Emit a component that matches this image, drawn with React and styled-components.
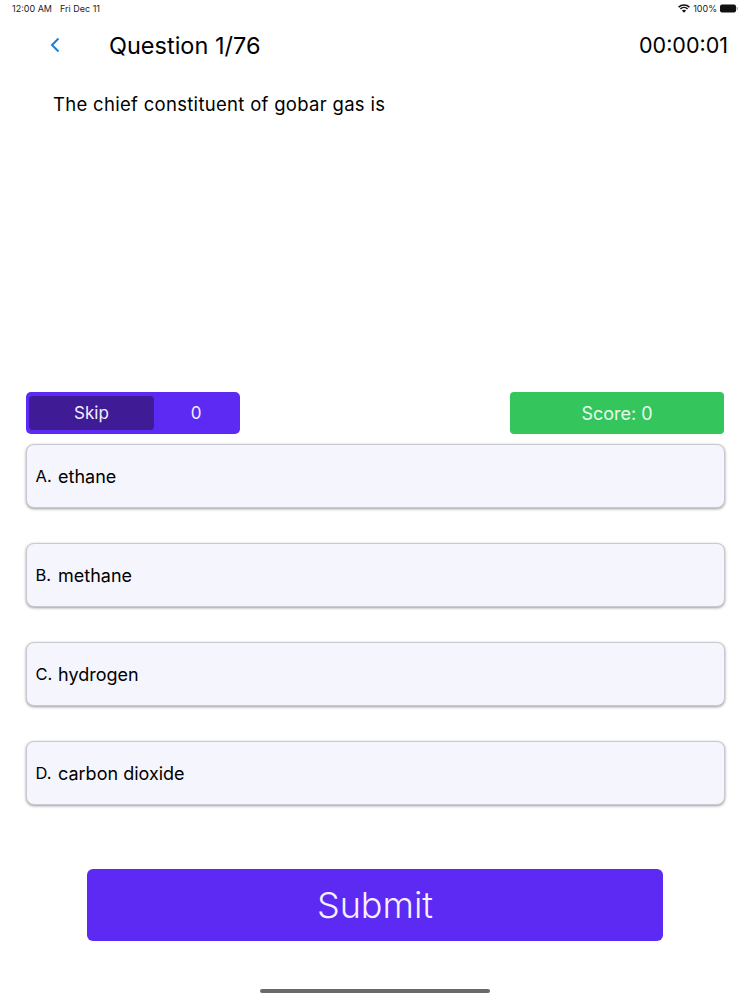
import React from "react";
import styled, { createGlobalStyle } from "styled-components";

const options = [
  { letter: "A.", text: "ethane" },
  { letter: "B.", text: "methane" },
  { letter: "C.", text: "hydrogen" },
  { letter: "D.", text: "carbon dioxide" },
];

const App = () => (
  <Page>
    <Global />
    <StatusBar>
      <StatusLeft>
        <span>12:00 AM</span>
        <span>Fri Dec 11</span>
      </StatusLeft>
      <StatusRight>
        <svg width="12" height="9" viewBox="0 0 12 9">
          <path d="M0.6 3.1C3.6 0.2 8.4 0.2 11.4 3.1" fill="none" stroke="#111" strokeWidth="1.5" />
          <path d="M2.4 4.9C4.4 3 7.6 3 9.6 4.9" fill="none" stroke="#111" strokeWidth="1.5" />
          <path d="M6 8.8L3.9 6.6C5 5.5 7 5.5 8.1 6.6Z" fill="#111" />
        </svg>
        <span>100%</span>
        <svg width="18" height="9" viewBox="0 0 18 9">
          <rect x="0" y="0.5" width="16" height="8" rx="2" fill="#111" />
          <rect x="16.6" y="3" width="1.2" height="3" rx="0.6" fill="#999" />
        </svg>
      </StatusRight>
    </StatusBar>
    <Header>
      <BackIcon width="10" height="16" viewBox="0 0 10 16">
        <path d="M8.5 1.5L2 8L8.5 14.5" fill="none" stroke="#1c7ed6" strokeWidth="2" />
      </BackIcon>
      <Title>Question 1/76</Title>
      <Timer>00:00:01</Timer>
    </Header>
    <Question>The chief constituent of gobar gas is</Question>
    <Counters>
      <SkipBox>
        <SkipButton>Skip</SkipButton>
        <SkipCount>0</SkipCount>
      </SkipBox>
      <ScoreBox>Score: 0</ScoreBox>
    </Counters>
    <OptionList>
      {options.map((o) => (
        <Option key={o.letter}>
          <Letter>{o.letter}</Letter>
          <span>{o.text}</span>
        </Option>
      ))}
    </OptionList>
    <SubmitButton>Submit</SubmitButton>
    <HomeBar />
  </Page>
);

const Global = createGlobalStyle`
  html, body {
    margin: 0;
    padding: 0;
    background: #fff;
  }
`;

const Page = styled.div`
  width: 750px;
  height: 1000px;
  display: flex;
  flex-direction: column;
  overflow: hidden;
  font-family: "Inter", "Liberation Sans", sans-serif;
  color: #000;
  background: #fff;
`;

const StatusBar = styled.div`
  display: flex;
  justify-content: space-between;
  align-items: center;
  height: 17px;
  padding: 0 12px 0 12px;
  font-size: 9px;
  color: #222;
`;

const StatusLeft = styled.div`
  display: flex;
  gap: 8px;
`;

const StatusRight = styled.div`
  display: flex;
  align-items: center;
  gap: 3px;
`;

const Header = styled.div`
  display: flex;
  align-items: center;
  height: 56px;
  padding: 0 22px 0 50px;
`;

const BackIcon = styled.svg`
  margin-right: 49px;
`;

const Title = styled.div`
  flex: 1;
  font-size: 23.5px;
`;

const Timer = styled.div`
  font-size: 21.5px;
`;

const Question = styled.div`
  margin: 20px 0 0 53px;
  height: 299px;
  font-size: 18.5px;
  letter-spacing: 0.3px;
  line-height: 22px;
`;

const Counters = styled.div`
  display: flex;
  justify-content: space-between;
  padding: 0 26px;
`;

const SkipBox = styled.div`
  display: flex;
  align-items: center;
  width: 214px;
  height: 42px;
  padding: 4px 0 4px 3px;
  box-sizing: border-box;
  border-radius: 5px;
  background: #5c2af2;
  color: #f3eeff;
  font-size: 17px;
`;

const SkipButton = styled.div`
  display: flex;
  align-items: center;
  justify-content: center;
  width: 125px;
  height: 100%;
  border-radius: 4px;
  background: #3f1c96;
`;

const SkipCount = styled.div`
  flex: 1;
  text-align: center;
  padding-right: 2px;
`;

const ScoreBox = styled.div`
  display: flex;
  align-items: center;
  justify-content: center;
  width: 214px;
  height: 42px;
  border-radius: 4px;
  background: #34c65d;
  color: #e8fbee;
  font-size: 18px;
`;

const OptionList = styled.div`
  display: flex;
  flex-direction: column;
  gap: 35px;
  margin: 10px 25.5px 0;
`;

const Option = styled.div`
  display: flex;
  align-items: center;
  height: 64px;
  box-sizing: border-box;
  padding-left: 9px;
  border-radius: 8px;
  background: #f5f5fd;
  border: 1px solid #c9c9d2;
  box-shadow: 0 1px 3px rgba(0, 0, 0, 0.4);
  font-size: 18px;
`;

const Letter = styled.span`
  width: 22.5px;
  font-size: 16.5px;
`;

const SubmitButton = styled.div`
  display: flex;
  align-items: center;
  justify-content: center;
  align-self: center;
  width: 576px;
  height: 72px;
  margin-top: 64px;
  border-radius: 6px;
  background: #5c2af2;
  color: #f6f0ff;
  font-size: 36px;
  font-weight: 300;
`;

const HomeBar = styled.div`
  align-self: center;
  width: 230px;
  height: 4px;
  margin-top: 48px;
  border-radius: 2px;
  background: #6a6a6a;
`;

export default App;
